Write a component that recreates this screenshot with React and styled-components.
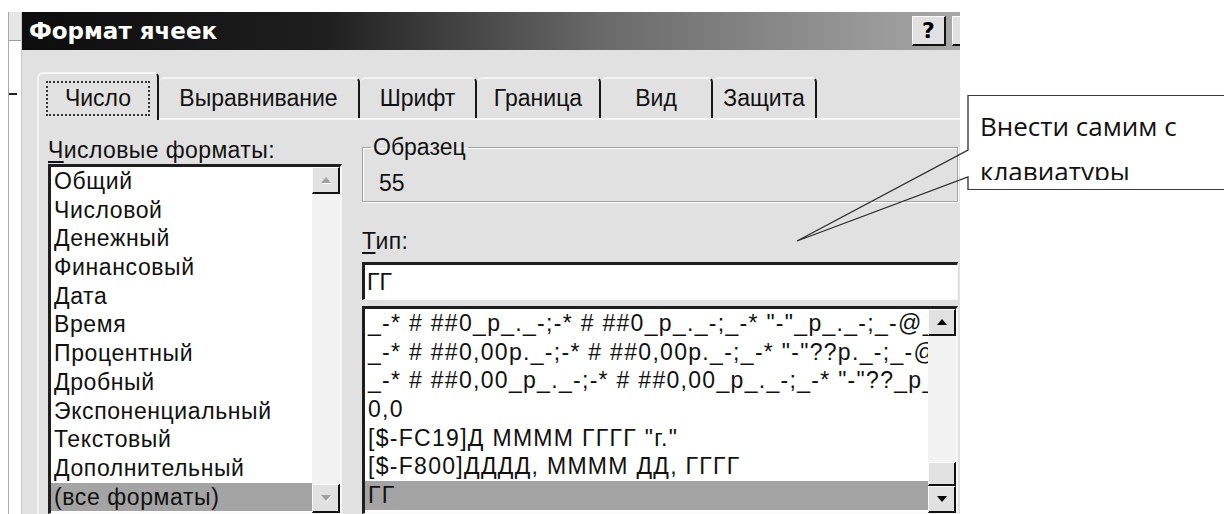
import styled, { createGlobalStyle } from "styled-components";

const GlobalStyle = createGlobalStyle`
  html, body {
    margin: 0;
    padding: 0;
    background: #fff;
  }
  body {
    width: 1224px;
    height: 514px;
    overflow: hidden;
    font-family: "Liberation Sans", Arial, sans-serif;
    color: #111;
  }
`;

const Page = styled.div`
  position: relative;
  display: flex;
  height: 514px;
  padding: 12px 0 0 8px;
  box-sizing: border-box;
  overflow: hidden;
`;

const SideStrip = styled.div`
  width: 12px;
  border-left: 1px solid #a9a9a9;
  border-right: 1px solid #cacaca;
  display: flex;
  flex-direction: column;
`;

const StripHead = styled.div`
  height: 28px;
  background: #e6e6e6;
  border-bottom: 1px solid #9c9c9c;
`;

const StripDash = styled.div`
  width: 8px;
  height: 2px;
  margin-top: 52px;
  background: #222;
`;

const Dialog = styled.div`
  width: 938px;
  display: flex;
  flex-direction: column;
  background: #e1e1e1;
  overflow: hidden;
`;

const TitleBar = styled.div`
  height: 38px;
  flex: none;
  display: flex;
  align-items: center;
  justify-content: space-between;
  padding-left: 7px;
  background: linear-gradient(to right, #0d0d0d 0%, #1e1e1e 32%, #6a6a6a 62%, #a8a8a8 100%);
`;

const Title = styled.span`
  font-family: "DejaVu Sans", sans-serif;
  font-weight: bold;
  font-size: 23px;
  color: #fff;
`;

const TitleButtons = styled.div`
  display: flex;
  gap: 6px;
  margin-right: -26px;
`;

const TitleButton = styled.div`
  width: 34px;
  height: 30px;
  box-sizing: border-box;
  display: flex;
  align-items: center;
  justify-content: center;
  background: #e1e1e1;
  border-top: 1px solid #fff;
  border-left: 1px solid #fff;
  border-right: 2px solid #111;
  border-bottom: 2px solid #111;
  font-family: "DejaVu Sans", sans-serif;
  font-weight: bold;
  font-size: 22px;
  color: #000;
`;

const TabStrip = styled.div`
  height: 68px;
  flex: none;
  display: flex;
  align-items: flex-end;
  padding-left: 15px;
  box-sizing: border-box;
`;

const Tab = styled.div`
  position: relative;
  z-index: ${(p) => (p.$active ? 1 : 0)};
  width: ${(p) => p.$w}px;
  height: ${(p) => (p.$active ? 48 : 41)}px;
  margin-bottom: ${(p) => (p.$active ? -2 : 0)}px;
  box-sizing: border-box;
  display: flex;
  align-items: center;
  justify-content: center;
  background: #e1e1e1;
  border-top: 2px solid #f4f4f4;
  border-left: ${(p) => (p.$first ? "2px solid #f4f4f4" : "none")};
  border-right: 2px solid #161616;
  border-radius: 6px 5px 0 0;
  font-size: 23px;
  white-space: nowrap;
`;

const FocusLabel = styled.span`
  width: 104px;
  height: 35px;
  box-sizing: border-box;
  display: flex;
  align-items: center;
  justify-content: center;
  border: 2px dotted #333;
  margin-top: 2px;
`;

const Panel = styled.div`
  flex: 1;
  margin-left: 15px;
  border-top: 2px solid #f4f4f4;
  border-left: 2px solid #f4f4f4;
  padding: 17px 0 0 9px;
  display: grid;
  grid-template-columns: 294px 596px;
  column-gap: 20px;
  align-items: start;
`;

const Column = styled.div`
  display: flex;
  flex-direction: column;
`;

const FieldLabel = styled.div`
  font-size: 23px;
  line-height: 26px;
  letter-spacing: 0.4px;
  margin-top: ${(p) => p.$top || 0}px;
  margin-bottom: ${(p) => p.$bottom || 0}px;
`;

const Key = styled.span`
  text-decoration: underline;
  text-decoration-thickness: 2px;
  text-underline-offset: 3px;
`;

const ListBox = styled.div`
  height: ${(p) => p.$h}px;
  box-sizing: border-box;
  display: grid;
  grid-template-columns: 1fr 28px;
  background: #fff;
  border-style: solid;
  border-width: 3px 2px 1px 3px;
  border-color: #1e1e1e #f7f7f7 #f7f7f7 #1e1e1e;
  overflow: hidden;
`;

const Items = styled.div`
  display: flex;
  flex-direction: column;
  min-width: 0;
  letter-spacing: ${(p) => p.$spacing || 0}px;
`;

const Item = styled.div`
  height: 28.7px;
  flex: none;
  line-height: 28.7px;
  padding-left: 3px;
  font-size: 23px;
  white-space: nowrap;
  overflow: hidden;
  background: ${(p) => (p.$selected ? "#a4a4a4" : "transparent")};
`;

const ScrollBar = styled.div`
  display: flex;
  flex-direction: column;
  background: #f2f2f2;
`;

const ScrollButton = styled.div`
  height: ${(p) => p.$h || 27}px;
  flex: none;
  box-sizing: border-box;
  display: flex;
  align-items: center;
  justify-content: center;
  background: #e1e1e1;
  border-top: 1px solid #fbfbfb;
  border-left: 1px solid #fbfbfb;
  border-right: 2px solid #111;
  border-bottom: 2px solid #111;
`;

const Track = styled.div`
  flex: 1;
`;

const Arrow = styled.span`
  width: 0;
  height: 0;
  border-left: 5px solid transparent;
  border-right: 5px solid transparent;
  ${(p) =>
    p.$down
      ? `border-top: 6px solid ${p.$off ? "#a0a0a0" : "#000"};`
      : `border-bottom: 6px solid ${p.$off ? "#a0a0a0" : "#000"};`}
  ${(p) => (p.$off ? "filter: drop-shadow(1px 1px 0 #fff);" : "")}
`;

const GroupBox = styled.fieldset`
  margin: -3px 0 0;
  min-width: 0;
  padding: 0 16px 5px;
  border: 1px solid #a2a2a2;
  box-shadow: inset 1px 1px 0 #fff, 1px 1px 0 #fff;
`;

const Legend = styled.legend`
  margin-left: -8px;
  padding: 0 2px;
  font-size: 23px;
  line-height: 26px;
`;

const Sample = styled.div`
  margin-top: 10px;
  font-size: 23px;
  line-height: 26px;
`;

const TextField = styled.input`
  height: 38px;
  box-sizing: border-box;
  margin: 0 0 6px;
  padding: 0 0 0 2px;
  background: #fff;
  border-style: solid;
  border-width: 3px 1px 1px 3px;
  border-color: #1e1e1e #f7f7f7 #f7f7f7 #1e1e1e;
  outline: none;
  font-family: inherit;
  font-size: 23px;
  color: #111;
`;

const CalloutBox = styled.div`
  position: absolute;
  left: 968px;
  top: 95px;
  width: 300px;
  height: 95px;
  box-sizing: border-box;
  background: #fff;
  border: 1.5px solid #3a3a3a;
  border-left: none;
`;

const CalloutText = styled.div`
  margin-top: 8px;
  height: 76px;
  padding-left: 12px;
  overflow: hidden;
  font-family: "Open Sans", "Noto Sans", sans-serif;
  font-size: 26px;
  line-height: 45px;
  color: #111;
`;

const Pointer = styled.svg`
  position: absolute;
  left: 0;
  top: 0;
  pointer-events: none;
`;

const tabs = [
  { label: "Число", w: 122 },
  { label: "Выравнивание", w: 201 },
  { label: "Шрифт", w: 117 },
  { label: "Граница", w: 124 },
  { label: "Вид", w: 112 },
  { label: "Защита", w: 104 },
];

const categories = [
  "Общий",
  "Числовой",
  "Денежный",
  "Финансовый",
  "Дата",
  "Время",
  "Процентный",
  "Дробный",
  "Экспоненциальный",
  "Текстовый",
  "Дополнительный",
  "(все форматы)",
];

const formats = [
  '_-* # ##0_р_._-;-* # ##0_р_._-;_-* "-"_р_._-;_-@_-',
  '_-* # ##0,00р._-;-* # ##0,00р._-;_-* "-"??р._-;_-@_-',
  '_-* # ##0,00_р_._-;-* # ##0,00_р_._-;_-* "-"??_р_._-;_-@_-',
  "0,0",
  '[$-FC19]Д ММММ ГГГГ "г."',
  "[$-F800]ДДДД, ММММ ДД, ГГГГ",
  "ГГ",
];

export default function App() {
  return (
    <Page>
      <GlobalStyle />
      <SideStrip>
        <StripHead />
        <StripDash />
      </SideStrip>

      <Dialog>
        <TitleBar>
          <Title>Формат ячеек</Title>
          <TitleButtons>
            <TitleButton>?</TitleButton>
            <TitleButton>×</TitleButton>
          </TitleButtons>
        </TitleBar>

        <TabStrip>
          {tabs.map((t, i) => (
            <Tab key={t.label} $w={t.w} $active={i === 0} $first={i === 0}>
              {i === 0 ? <FocusLabel>{t.label}</FocusLabel> : t.label}
            </Tab>
          ))}
        </TabStrip>

        <Panel>
          <Column>
            <FieldLabel $bottom={1}>
              <Key>Ч</Key>исловые форматы:
            </FieldLabel>
            <ListBox $h={350}>
              <Items $spacing={0.6}>
                {categories.map((c, i) => (
                  <Item key={c} $selected={i === categories.length - 1}>
                    {c}
                  </Item>
                ))}
              </Items>
              <ScrollBar>
                <ScrollButton>
                  <Arrow $off />
                </ScrollButton>
                <Track />
                <ScrollButton $h={29}>
                  <Arrow $down $off />
                </ScrollButton>
              </ScrollBar>
            </ListBox>
          </Column>

          <Column>
            <GroupBox>
              <Legend>Образец</Legend>
              <Sample>55</Sample>
            </GroupBox>
            <FieldLabel $top={26} $bottom={8}>
              <Key>Т</Key>ип:
            </FieldLabel>
            <TextField readOnly value="ГГ" />
            <ListBox $h={208}>
              <Items $spacing={1.3}>
                {formats.map((f, i) => (
                  <Item key={f} $selected={i === formats.length - 1}>
                    {f}
                  </Item>
                ))}
              </Items>
              <ScrollBar>
                <ScrollButton>
                  <Arrow />
                </ScrollButton>
                <Track />
                <ScrollButton $h={24} />
                <ScrollButton>
                  <Arrow $down />
                </ScrollButton>
              </ScrollBar>
            </ListBox>
          </Column>
        </Panel>
      </Dialog>

      <CalloutBox>
        <CalloutText>Внести самим с клавиатуры</CalloutText>
      </CalloutBox>
      <Pointer width="1224" height="514" viewBox="0 0 1224 514">
        <polyline
          points="968,95 968,150 797,241 968,177 968,190"
          fill="none"
          stroke="#2e2e2e"
          strokeWidth="1.3"
        />
      </Pointer>
    </Page>
  );
}
